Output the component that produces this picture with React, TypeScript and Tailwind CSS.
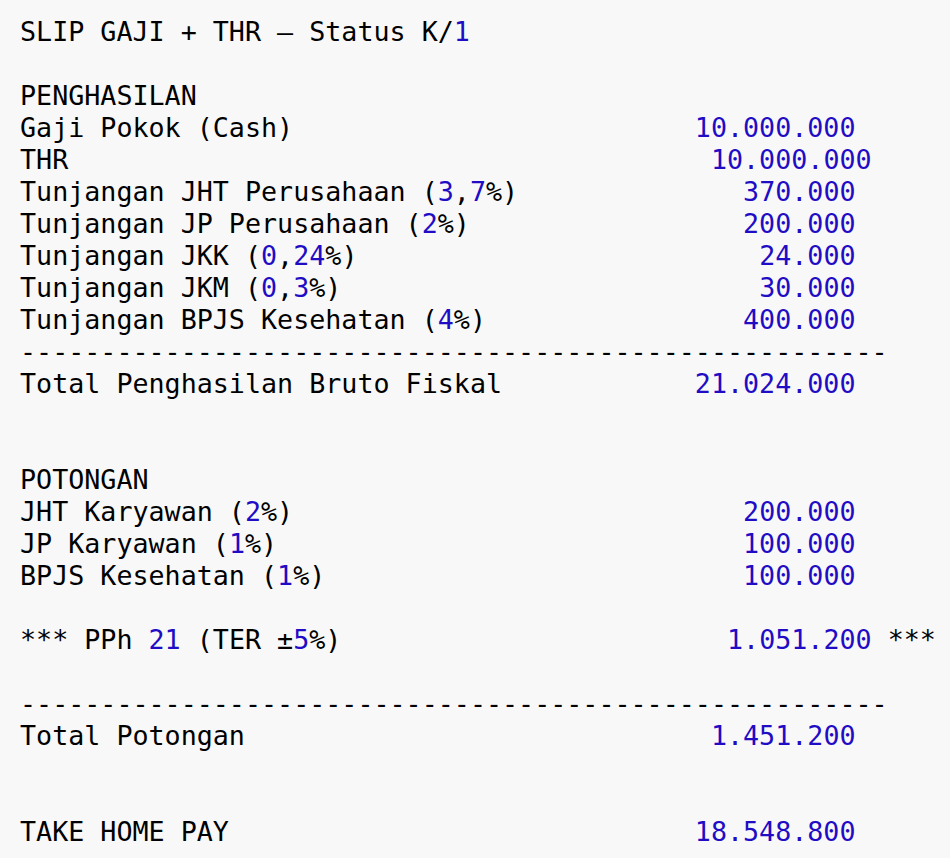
type Row = [string, string?, number?, string?];

const rows: Row[] = [
  ["SLIP GAJI + THR — Status K/1"],
  [""],
  ["PENGHASILAN"],
  ["Gaji Pokok (Cash)", "10.000.000", 42],
  ["THR", "10.000.000", 43],
  ["Tunjangan JHT Perusahaan (3,7%)", "370.000", 45],
  ["Tunjangan JP Perusahaan (2%)", "200.000", 45],
  ["Tunjangan JKK (0,24%)", "24.000", 46],
  ["Tunjangan JKM (0,3%)", "30.000", 46],
  ["Tunjangan BPJS Kesehatan (4%)", "400.000", 45],
  ["-".repeat(54)],
  ["Total Penghasilan Bruto Fiskal", "21.024.000", 42],
  [""],
  [""],
  ["POTONGAN"],
  ["JHT Karyawan (2%)", "200.000", 45],
  ["JP Karyawan (1%)", "100.000", 45],
  ["BPJS Kesehatan (1%)", "100.000", 45],
  [""],
  ["*** PPh 21 (TER ±5%)", "1.051.200", 44, " ***"],
  [""],
  ["-".repeat(54)],
  ["Total Potongan", "1.451.200", 43],
  [""],
  [""],
  ["TAKE HOME PAY", "18.548.800", 42],
];

// digits (and dotted thousands) get the number colour
const Highlight = ({ text }: { text: string }) => {
  const parts = text.split(/(\d+(?:\.\d+)*)/);
  return (
    <>
      {parts.map((p, i) =>
        i % 2 === 1 ? (
          <span key={i} className="text-[#1f0cc4]">
            {p}
          </span>
        ) : (
          <span key={i}>{p}</span>
        )
      )}
    </>
  );
};

export default function App() {
  return (
    <div className="min-h-screen w-full bg-[#f8f8f8] overflow-hidden">
      <pre
        className="pt-4 pl-5 text-[26.7px] leading-[32px] text-black whitespace-pre"
        style={{ fontFamily: '"DejaVu Sans Mono", "Liberation Mono", monospace' }}
      >
        {rows.map(([label, value, col, tail], i) => (
          <div key={i} className="h-8">
            <Highlight text={value ? label.padEnd(col ?? 0, " ") : label || " "} />
            {value && <span className="text-[#1f0cc4]">{value}</span>}
            {tail}
          </div>
        ))}
      </pre>
    </div>
  );
}
